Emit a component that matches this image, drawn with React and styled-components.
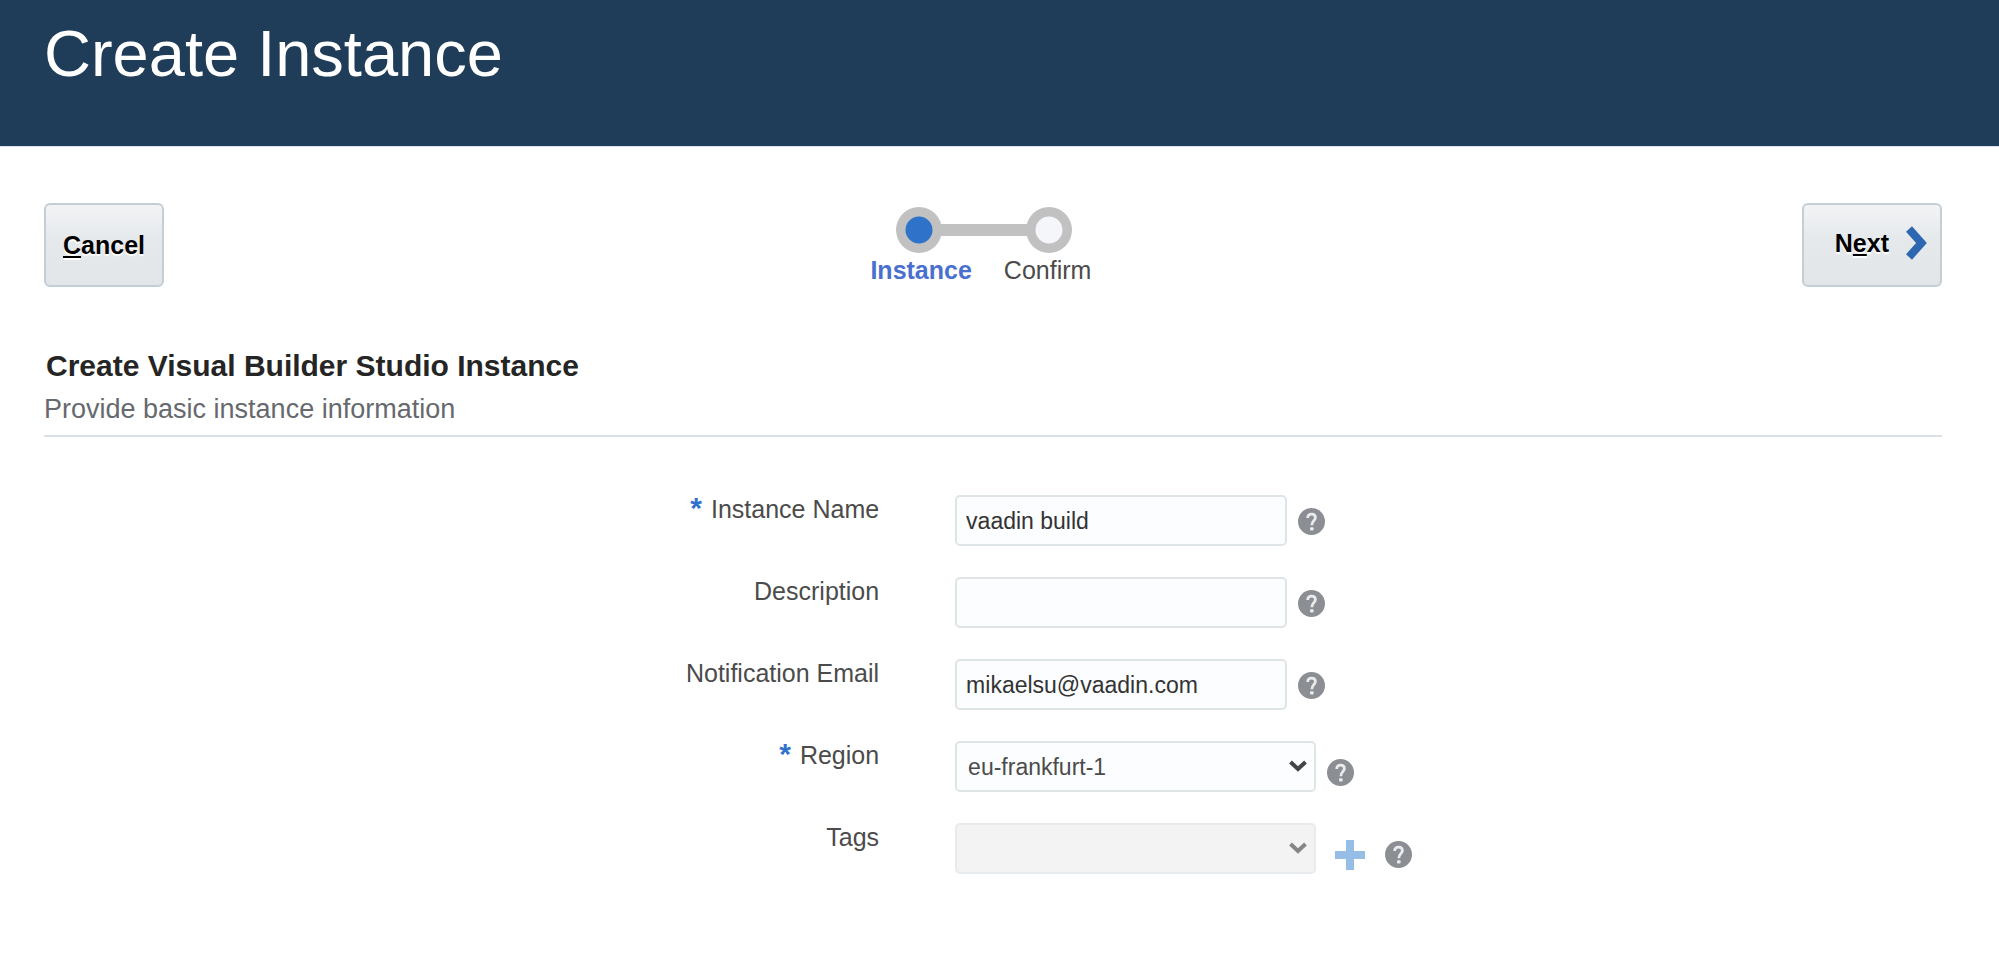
import React, { useState } from "react";
import styled, { createGlobalStyle } from "styled-components";

const GlobalStyle = createGlobalStyle`
  *, *::before, *::after { box-sizing: border-box; }
  body {
    margin: 0;
    background: #fff;
    color: #4b4b4b;
    font-family: "Liberation Sans", Arial, Helvetica, sans-serif;
    font-size: 25px;
  }
  button, input, select { font-family: inherit; }
`;

const PageHeader = styled.header`
  padding: 16px 44px 54px;
  background: #1f3c58;
  border-bottom: 1px solid #dfe1ee;
`;

const PageTitle = styled.h1`
  margin: 0;
  color: #fff;
  font-size: 65px;
  font-weight: 400;
  line-height: 76px;
`;

const Main = styled.main`
  padding: 56px 57px 56px 44px;
`;

const Toolbar = styled.div`
  display: flex;
  align-items: center;
  justify-content: space-between;
`;

const ToolbarButton = styled.button`
  display: flex;
  align-items: center;
  gap: 17px;
  height: 84px;
  padding: ${(p) => (p.$withIcon ? "0 13px 4px 31px" : "0 17px")};
  border: 2px solid #c4ced7;
  border-radius: 6px;
  background: linear-gradient(#f2f3f5, #e5e9ec 45%, #e3e6e9);
  color: #000;
  font-size: 25px;
  font-weight: 700;
  text-shadow: 0 2px 1px #fff;
  cursor: pointer;
`;

const AccessKey = styled.span`
  text-decoration: underline;
  text-decoration-thickness: 2px;
  text-underline-offset: 2px;
  text-decoration-skip-ink: none;
`;

const Progress = styled.nav`
  display: flex;
  flex-direction: column;
  align-items: center;
  gap: 2px;
  padding: 2px 0 0 2px;
`;

const StepList = styled.ol`
  display: flex;
  gap: 32px;
  margin: 0;
  padding: 0 6px 0 0;
  list-style: none;
`;

const Step = styled.li`
  color: ${(p) => (p.$current ? "#4a70cf" : "#4b4b4b")};
  font-weight: ${(p) => (p.$current ? 700 : 400)};
  line-height: 30px;
`;

const SectionHeader = styled.div`
  margin-top: 61px;
  padding-bottom: 10px;
  border-bottom: 2px solid #dbe0e4;
`;

const SectionTitle = styled.h2`
  margin: 0 0 9px;
  padding-left: 2px;
  color: #252525;
  font-size: 30px;
  line-height: 36px;
`;

const SectionHint = styled.p`
  margin: 0;
  color: #66696e;
  font-size: 27px;
  line-height: 32px;
`;

const Form = styled.form`
  display: flex;
  flex-direction: column;
  gap: 31px;
  margin-top: 58px;
`;

const FormRow = styled.div`
  display: grid;
  grid-template-columns: 44% 1fr;
  column-gap: 76px;
`;

const Label = styled.label`
  display: flex;
  align-items: baseline;
  justify-content: flex-end;
  gap: 9px;
  line-height: 28px;
`;

const Required = styled.span`
  color: #2f72cc;
  font-size: 30px;
  font-weight: 700;
  line-height: 24px;
`;

const Field = styled.div`
  display: flex;
  align-items: center;
  gap: 11px;
`;

const TextInput = styled.input`
  width: 332px;
  height: 51px;
  padding: 2px 9px 0;
  border: 2px solid #dfe4e7;
  border-radius: 5px;
  background: #fcfdff;
  color: #333;
  font-size: 23px;
`;

const SelectBox = styled.div`
  position: relative;
  width: 361px;
`;

const Select = styled.select`
  display: block;
  width: 100%;
  height: 51px;
  padding: 0 44px 0 11px;
  border: 2px solid ${(p) => (p.disabled ? "#e8ebed" : "#dfe4e7")};
  border-radius: 5px;
  background: ${(p) => (p.disabled ? "#f3f3f3" : "#fcfdff")};
  color: #4b4b4b;
  font-size: 23px;
  appearance: none;
  opacity: 1;
`;

const SelectArrow = styled.svg`
  position: absolute;
  top: 19px;
  right: 9px;
  pointer-events: none;
  color: ${(p) => (p.$disabled ? "#868686" : "#444")};
`;

const FieldActions = styled.div`
  display: flex;
  align-items: center;
  gap: 20px;
  padding-top: ${(p) => (p.$lowered ? "12px" : "2px")};
  padding-left: ${(p) => (p.$inset ? "8px" : "0")};
`;

const IconButton = styled.button`
  display: flex;
  padding: 0;
  border: 0;
  background: none;
  cursor: pointer;
`;

function Help({ topic }) {
  return (
    <IconButton type="button" aria-label={`Help for ${topic}`}>
      <svg width="27" height="27" viewBox="0 0 27 27" fill="none" aria-hidden="true">
        <circle cx="13.5" cy="13.5" r="13.5" fill="#8b8e93" />
        <path
          d="M9.7 10C9.7 7.3 11.2 6.1 13.6 6.1C16 6.1 17.4 7.4 17.4 9.5C17.4 12.5 13.8 12.9 13.8 17.2"
          stroke="#eaebed"
          strokeWidth="2.8"
        />
        <rect x="12" y="19.2" width="3.6" height="3.4" rx="1" fill="#eaebed" />
      </svg>
    </IconButton>
  );
}

function Dropdown({ id, disabled, value, onChange, options }) {
  return (
    <SelectBox>
      <Select id={id} disabled={disabled} value={value} onChange={onChange}>
        {options.map((option) => (
          <option key={option}>{option}</option>
        ))}
      </Select>
      <SelectArrow $disabled={disabled} width="18" height="12" viewBox="0 0 18 12" fill="none" aria-hidden="true">
        <path d="M1.5 2L9 9L16.5 2" stroke="currentColor" strokeWidth="4" />
      </SelectArrow>
    </SelectBox>
  );
}

function StepTrack() {
  return (
    <svg width="176" height="46" viewBox="0 0 176 46" aria-hidden="true">
      <rect x="40" y="17" width="96" height="12" fill="#c1c1c1" />
      <circle cx="23" cy="23" r="23" fill="#c1c1c1" />
      <circle cx="153" cy="23" r="23" fill="#c1c1c1" />
      <circle cx="23" cy="23" r="13.5" fill="#2f72c9" />
      <circle cx="153" cy="23" r="13.5" fill="#f4f6f9" />
    </svg>
  );
}

export default function App() {
  const [name, setName] = useState("vaadin build");
  const [description, setDescription] = useState("");
  const [email, setEmail] = useState("mikaelsu@vaadin.com");
  const [region, setRegion] = useState("eu-frankfurt-1");

  return (
    <>
      <GlobalStyle />
      <PageHeader>
        <PageTitle>Create Instance</PageTitle>
      </PageHeader>
      <Main>
        <Toolbar>
          <ToolbarButton type="button">
            <span>
              <AccessKey>C</AccessKey>ancel
            </span>
          </ToolbarButton>
          <Progress aria-label="Progress">
            <StepTrack />
            <StepList>
              <Step $current aria-current="step">Instance</Step>
              <Step>Confirm</Step>
            </StepList>
          </Progress>
          <ToolbarButton type="button" $withIcon>
            <span>
              N<AccessKey>e</AccessKey>xt
            </span>
            <svg width="21" height="34" viewBox="0 0 21 34" fill="none" aria-hidden="true">
              <path d="M3 3L15.5 17L3 31" stroke="#2e67b1" strokeWidth="8" />
            </svg>
          </ToolbarButton>
        </Toolbar>

        <SectionHeader>
          <SectionTitle>Create Visual Builder Studio Instance</SectionTitle>
          <SectionHint>Provide basic instance information</SectionHint>
        </SectionHeader>

        <Form onSubmit={(e) => e.preventDefault()}>
          <FormRow>
            <Label htmlFor="name">
              <Required>*</Required>
              Instance Name
            </Label>
            <Field>
              <TextInput id="name" required value={name} onChange={(e) => setName(e.target.value)} />
              <FieldActions>
                <Help topic="Instance Name" />
              </FieldActions>
            </Field>
          </FormRow>
          <FormRow>
            <Label htmlFor="description">Description</Label>
            <Field>
              <TextInput id="description" value={description} onChange={(e) => setDescription(e.target.value)} />
              <FieldActions>
                <Help topic="Description" />
              </FieldActions>
            </Field>
          </FormRow>
          <FormRow>
            <Label htmlFor="email">Notification Email</Label>
            <Field>
              <TextInput id="email" type="email" value={email} onChange={(e) => setEmail(e.target.value)} />
              <FieldActions>
                <Help topic="Notification Email" />
              </FieldActions>
            </Field>
          </FormRow>
          <FormRow>
            <Label htmlFor="region">
              <Required>*</Required>
              Region
            </Label>
            <Field>
              <Dropdown
                id="region"
                value={region}
                onChange={(e) => setRegion(e.target.value)}
                options={["eu-frankfurt-1"]}
              />
              <FieldActions $lowered>
                <Help topic="Region" />
              </FieldActions>
            </Field>
          </FormRow>
          <FormRow>
            <Label htmlFor="tags">Tags</Label>
            <Field>
              <Dropdown id="tags" disabled options={[]} />
              <FieldActions $lowered $inset>
                <IconButton type="button" aria-label="Add tag">
                  <svg width="30" height="30" viewBox="0 0 30 30" aria-hidden="true">
                    <path d="M11 0H19V11H30V19H19V30H11V19H0V11H11Z" fill="#95bde6" />
                  </svg>
                </IconButton>
                <Help topic="Tags" />
              </FieldActions>
            </Field>
          </FormRow>
        </Form>
      </Main>
    </>
  );
}
